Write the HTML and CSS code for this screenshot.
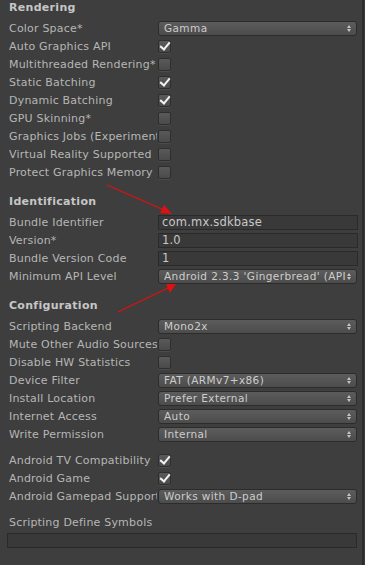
FILE: index.html
```html
<!DOCTYPE html>
<html>

<head>
    <meta name="viewport" content="width=device-width, initial-scale=1">
    <title>Player Settings</title>

    <link rel="stylesheet" href="styles.css">

</head>

<body>
    <div class="window">
        <div class="panel">

            <div class="header first">Rendering</div>
            <div class="row"><span class="label">Color Space*</span><div class="popup"><span>Gamma</span></div></div>
            <div class="row"><span class="label">Auto Graphics API</span><span class="toggle on"></span></div>
            <div class="row"><span class="label">Multithreaded Rendering*</span><span class="toggle"></span></div>
            <div class="row"><span class="label">Static Batching</span><span class="toggle on"></span></div>
            <div class="row"><span class="label">Dynamic Batching</span><span class="toggle on"></span></div>
            <div class="row"><span class="label">GPU Skinning*</span><span class="toggle"></span></div>
            <div class="row"><span class="label">Graphics Jobs (Experimental)*</span><span class="toggle"></span></div>
            <div class="row"><span class="label">Virtual Reality Supported</span><span class="toggle"></span></div>
            <div class="row"><span class="label">Protect Graphics Memory</span><span class="toggle"></span></div>

            <div class="header">Identification</div>
            <div class="row"><span class="label">Bundle Identifier</span><div class="field">com.mx.sdkbase</div></div>
            <div class="row"><span class="label">Version*</span><div class="field">1.0</div></div>
            <div class="row"><span class="label">Bundle Version Code</span><div class="field">1</div></div>
            <div class="row"><span class="label">Minimum API Level</span><div class="popup"><span>Android 2.3.3 'Gingerbread' (API level 10)</span></div></div>

            <div class="header">Configuration</div>
            <div class="row"><span class="label">Scripting Backend</span><div class="popup"><span>Mono2x</span></div></div>
            <div class="row"><span class="label">Mute Other Audio Sources</span><span class="toggle"></span></div>
            <div class="row"><span class="label">Disable HW Statistics</span><span class="toggle"></span></div>
            <div class="row"><span class="label">Device Filter</span><div class="popup"><span>FAT (ARMv7+x86)</span></div></div>
            <div class="row"><span class="label">Install Location</span><div class="popup"><span>Prefer External</span></div></div>
            <div class="row"><span class="label">Internet Access</span><div class="popup"><span>Auto</span></div></div>
            <div class="row"><span class="label">Write Permission</span><div class="popup"><span>Internal</span></div></div>

            <div class="group">
                <div class="row"><span class="label">Android TV Compatibility</span><span class="toggle on"></span></div>
                <div class="row"><span class="label">Android Game</span><span class="toggle on"></span></div>
                <div class="row"><span class="label">Android Gamepad Support Level</span><div class="popup"><span>Works with D-pad</span></div></div>
            </div>

            <div class="group">
                <div class="row"><span class="label wide">Scripting Define Symbols</span></div>
                <div class="field long"></div>
            </div>

        </div>
        <div class="edge"></div>
    </div>

    <!-- annotation arrows drawn over the inspector -->
    <svg class="marks" width="365" height="565" viewBox="0 0 365 565">
        <line x1="107" y1="185" x2="164" y2="210" stroke="#e01010" stroke-width="1.3" />
        <polygon points="172,214 160,213 164,205" fill="#e01010" />
        <line x1="118" y1="312" x2="168" y2="288" stroke="#e01010" stroke-width="1.3" />
        <polygon points="176,284 170,293 166,284" fill="#e01010" />
    </svg>
</body>

</html>
```

FILE: styles.css
```css
body {
    margin: 0;
    background-color: #3e3e3e;
    font-family: "DejaVu Sans", sans-serif;
    font-size: 11px;
    color: #b6b6b6;
}

.window {
    display: flex;
    width: 365px;
    height: 565px;
    overflow: hidden;
}

.panel {
    flex: 1;
    padding-left: 9px;
    padding-right: 4px;
}

.edge {
    width: 4px;
    border-left: 2px solid #2c2c2c;
    background-color: #3a3a3a;
}

.header {
    height: 16px;
    line-height: 16px;
    margin-top: 13px;
    margin-bottom: 3px;
    font-weight: bold;
    color: #c6c6c6;
    letter-spacing: 0.3px;
}

.header.first {
    margin-top: 0;
}

.group {
    margin-top: 8px;
}

.row {
    display: flex;
    align-items: center;
    height: 18px;
}

.label {
    width: 148px;
    flex: none;
    overflow: hidden;
    white-space: nowrap;
    letter-spacing: 0.2px;
    margin-right: 1px;
}

.label.wide {
    width: auto;
}

/* checkbox */
.toggle {
    position: relative;
    width: 11px;
    height: 11px;
    margin-top: 1px;
    border: 1px solid #2e2e2e;
    border-radius: 2px;
    background: linear-gradient(#5a5a5a, #4a4a4a);
    box-shadow: 0 1px 0 #4c4c4c;
}

.toggle.on:after {
    content: "";
    position: absolute;
    left: 3px;
    top: -1px;
    width: 4px;
    height: 8px;
    border-right: 2px solid #f2f2f2;
    border-bottom: 2px solid #f2f2f2;
    transform: rotate(40deg);
}

/* dropdown */
.popup {
    position: relative;
    display: flex;
    width: 182px;
    height: 13px;
    line-height: 13px;
    padding: 0 10px 0 5px;
    border: 1px solid #2c2c2c;
    border-radius: 3px;
    background: linear-gradient(#5c5c5c, #4c4c4c);
    color: #cdcdcd;
    font-size: 10.5px;
    letter-spacing: 0.4px;
}

.popup span {
    flex: 1;
    white-space: nowrap;
    overflow: hidden;
}

.popup:after {
    content: "";
    position: absolute;
    right: 5px;
    top: 3px;
    width: 0;
    height: 0;
    border-left: 2px solid transparent;
    border-right: 2px solid transparent;
    border-bottom: 3px solid #c4c4c4;
}

.popup:before {
    content: "";
    position: absolute;
    right: 5px;
    top: 7px;
    width: 0;
    height: 0;
    border-left: 2px solid transparent;
    border-right: 2px solid transparent;
    border-top: 3px solid #c4c4c4;
}

/* text field */
.field {
    width: 192px;
    height: 13px;
    line-height: 13px;
    padding: 0 3px;
    border: 1px solid #2a2a2a;
    background-color: #393939;
    color: #c8c8c8;
    font-size: 11.5px;
    letter-spacing: 0.2px;
    white-space: nowrap;
    overflow: hidden;
}

.field.long {
    width: 342px;
    margin-left: -2px;
    margin-top: 2px;
}

.marks {
    position: absolute;
    top: 0;
    left: 0;
    pointer-events: none;
}
```
